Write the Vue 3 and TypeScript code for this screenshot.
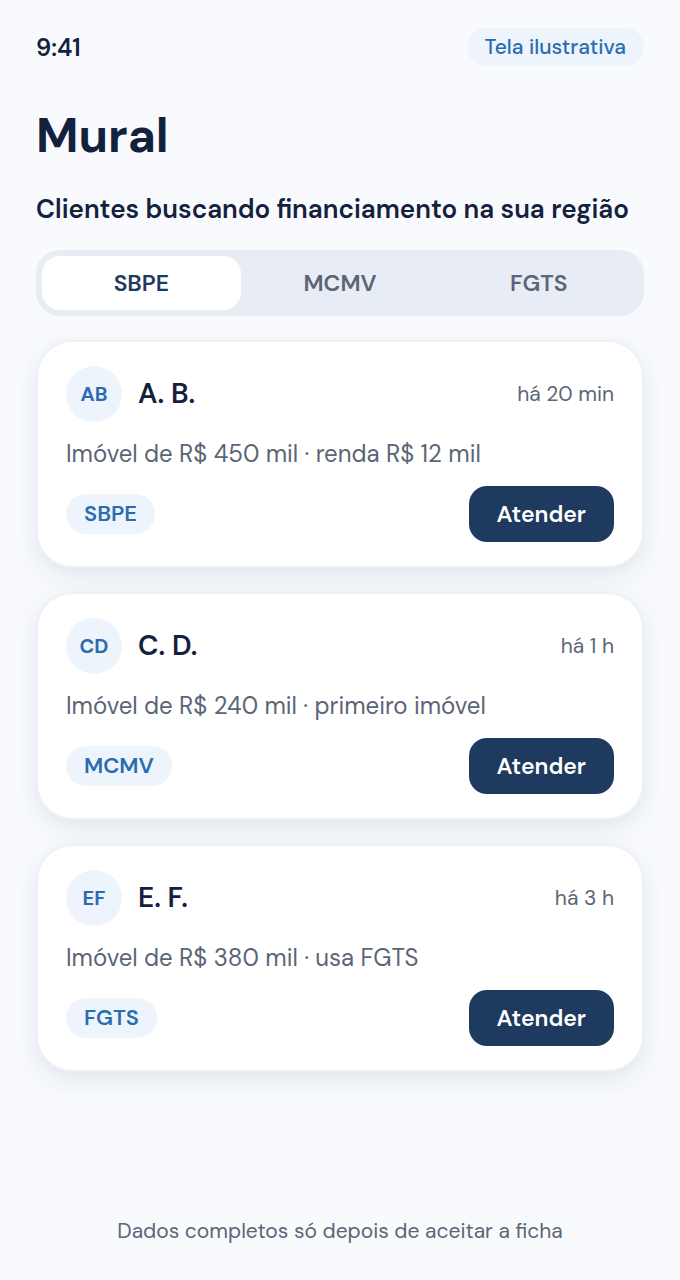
<script setup lang="ts">
import { ref } from 'vue'

interface Lead {
  initials: string
  name: string
  time: string
  details: string
  program: string
}

const programs: string[] = ['SBPE', 'MCMV', 'FGTS']
const selected = ref<string>('SBPE')

const leads: Lead[] = [
  { initials: 'AB', name: 'A. B.', time: 'há 20 min', details: 'Imóvel de R$ 450 mil · renda R$ 12 mil', program: 'SBPE' },
  { initials: 'CD', name: 'C. D.', time: 'há 1 h', details: 'Imóvel de R$ 240 mil · primeiro imóvel', program: 'MCMV' },
  { initials: 'EF', name: 'E. F.', time: 'há 3 h', details: 'Imóvel de R$ 380 mil · usa FGTS', program: 'FGTS' },
]
</script>

<template>
  <div class="screen">
    <header class="status">
      <time class="clock">9:41</time>
      <span class="notice">Tela ilustrativa</span>
    </header>

    <main class="content">
      <h1 class="title">Mural</h1>
      <h2 class="subtitle">Clientes buscando financiamento na sua região</h2>

      <div class="tabs" role="group" aria-label="Programa">
        <button
          v-for="program in programs"
          :key="program"
          type="button"
          class="tab"
          :class="{ active: program === selected }"
          :aria-pressed="program === selected"
          @click="selected = program"
        >
          {{ program }}
        </button>
      </div>

      <article v-for="lead in leads" :key="lead.initials" class="card">
        <div class="row">
          <span class="avatar">{{ lead.initials }}</span>
          <h3 class="name">{{ lead.name }}</h3>
          <span class="time">{{ lead.time }}</span>
        </div>
        <p class="details">{{ lead.details }}</p>
        <div class="row spread">
          <span class="tag">{{ lead.program }}</span>
          <button type="button" class="action">Atender</button>
        </div>
      </article>
    </main>

    <footer class="footnote">Dados completos só depois de aceitar a ficha</footer>
  </div>
</template>

<style>
body {
  margin: 0;
  background: #f8fafd;
}
</style>

<style scoped>
.screen {
  box-sizing: border-box;
  min-height: 100vh;
  padding: 28px 36px 31px;
  display: flex;
  flex-direction: column;
  background: #f8fafd;
  color: #14213d;
  font-family: "DM Sans", Inter, "Liberation Sans", sans-serif;
}

.status {
  display: flex;
  align-items: flex-start;
  justify-content: space-between;
}

.clock {
  font-size: 24px;
  line-height: 40px;
  font-weight: 600;
}

.notice {
  padding: 0 18px;
  border-radius: 20px;
  background: #eef4fb;
  color: #2b6cb0;
  font-size: 21px;
  line-height: 38px;
  font-weight: 500;
}

.content {
  display: flex;
  flex-direction: column;
}

.title {
  margin: 38px 0 0;
  font-size: 48px;
  line-height: 60px;
  font-weight: 700;
}

.subtitle {
  margin: 25px 0 23px;
  font-size: 26px;
  line-height: 36px;
  font-weight: 600;
}

.tabs {
  display: flex;
  padding: 6px;
  border-radius: 24px;
  background: #e8edf5;
}

.tab {
  flex: 1;
  padding: 0;
  border: 0;
  border-radius: 18px;
  background: transparent;
  color: #5b6576;
  font-family: inherit;
  font-size: 23px;
  line-height: 54px;
  font-weight: 600;
  cursor: pointer;
}

.tab.active {
  background: #ffffff;
  color: #1e3a5f;
}

.card {
  margin-top: 24px;
  padding: 24px 28px;
  border: 2px solid #edf1f6;
  border-radius: 36px;
  background: #ffffff;
  background-clip: padding-box;
  box-shadow: 0 8px 24px rgba(30, 58, 95, 0.1);
}

.row {
  display: flex;
  align-items: center;
  gap: 16px;
}

.spread {
  justify-content: space-between;
}

.avatar {
  width: 56px;
  border-radius: 50%;
  background: #eef4fb;
  color: #2b6cb0;
  font-size: 20px;
  line-height: 56px;
  font-weight: 700;
  text-align: center;
}

.name {
  flex: 1;
  margin: 0;
  font-size: 28px;
  line-height: 38px;
  font-weight: 600;
}

.time {
  color: #5b6576;
  font-size: 21px;
  line-height: 36px;
}

.details {
  margin: 14px 0;
  color: #5b6576;
  font-size: 24px;
  line-height: 36px;
}

.tag {
  padding: 0 18px;
  border-radius: 20px;
  background: #eef4fb;
  color: #2b6cb0;
  font-size: 22px;
  line-height: 40px;
  font-weight: 600;
}

.action {
  padding: 0 28px;
  border: 0;
  border-radius: 18px;
  background: #1e3a5f;
  color: #ffffff;
  font-family: inherit;
  font-size: 23px;
  line-height: 56px;
  font-weight: 600;
  cursor: pointer;
}

.footnote {
  margin-top: auto;
  color: #5b6576;
  font-size: 21px;
  line-height: 36px;
  text-align: center;
}
</style>
